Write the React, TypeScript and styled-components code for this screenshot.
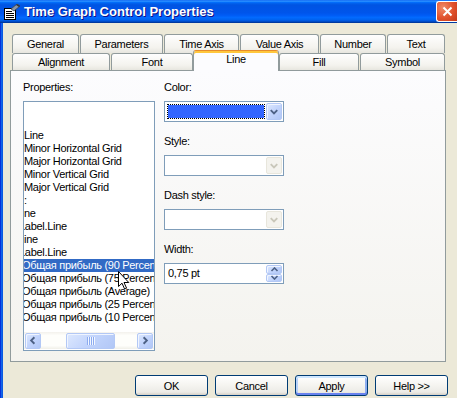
import React from 'react';
import styled, { createGlobalStyle, css } from 'styled-components';

const GlobalStyle = createGlobalStyle`
  html, body {
    margin: 0;
    padding: 0;
    background: #ece9d8;
  }
  body {
    font-family: "Liberation Sans", Arial, sans-serif;
    font-size: 11px;
    letter-spacing: -0.3px;
    color: #000;
  }
`;

const Window = styled.div`
  position: relative;
  width: 457px;
  height: 398px;
  overflow: hidden;
  display: flex;
  flex-direction: column;
  background: #ece9d8;
`;

const TitleBar = styled.div`
  height: 23px;
  flex-shrink: 0;
  display: flex;
  align-items: center;
  padding-left: 4px;
  background: linear-gradient(
    to bottom,
    #0058ee 0%, #3593ff 4%, #288eff 6%, #127dff 8%, #036ffc 10%,
    #0262ee 14%, #0057e5 20%, #0054e3 24%, #0055eb 56%, #005bf5 66%,
    #026afe 76%, #0062ef 86%, #0052d6 92%, #0040ab 96%, #003092 100%
  );
`;

const TitleText = styled.span`
  flex: 1;
  margin-left: 4px;
  color: #fff;
  font: bold 13px "Liberation Sans", Arial, sans-serif;
  letter-spacing: 0;
  text-shadow: 1px 1px #0f1089;
`;

const CloseButton = styled.div`
  align-self: flex-start;
  margin-top: 1px;
  width: 21px;
  height: 21px;
  box-sizing: border-box;
  border: 1px solid #fff;
  border-right: none;
  border-radius: 3px 0 0 3px;
  background: radial-gradient(circle at 30% 30%, #f08a68, #e0512c 55%, #c4391a);
  display: flex;
  align-items: center;
  justify-content: center;
`;

const Body = styled.div`
  flex: 1;
  display: flex;
  flex-direction: column;
  padding: 11px 0 0 10px;
  background: linear-gradient(
    to right,
    #0831d9 0, #0831d9 1px, #166aee 1px, #0855dd 3px, #ece9d8 3px
  );
`;

const TabArea = styled.div`
  width: 436px;
  display: flex;
  flex-direction: column;
`;

const TabRow = styled.div<{ $h: number }>`
  display: flex;
  gap: 1px;
  padding-left: 2px;
  height: ${p => p.$h}px;
`;

const Tab = styled.div<{ $w: number; $selected?: boolean }>`
  position: relative;
  width: ${p => p.$w}px;
  flex-shrink: 0;
  box-sizing: border-box;
  border: 1px solid #919b9c;
  border-bottom: none;
  border-radius: 3px 3px 0 0;
  background: linear-gradient(#fefefe, #f4f3ee 70%, #e7e6df);
  display: flex;
  align-items: center;
  justify-content: center;
  padding-bottom: 1px;
  white-space: nowrap;
  ${p => p.$selected && css`
    z-index: 2;
    margin: -3px -1px 0;
    height: calc(100% + 4px);
    border-top: 1px solid #e68b2c;
    box-shadow: inset 0 2px #ffc73c;
    background: #fcfcfe;
    padding-bottom: 5px;
  `}
`;

const Panel = styled.div`
  position: relative;
  z-index: 1;
  height: 292px;
  box-sizing: border-box;
  border: 1px solid #919b9c;
  border-top-color: #919b9c;
  background: linear-gradient(#fcfcfe, #f4f3ee);
  display: flex;
  gap: 9px;
  padding: 10px 12px 0;
`;

const Column = styled.div<{ $w: number }>`
  width: ${p => p.$w}px;
  display: flex;
  flex-direction: column;
`;

const Label = styled.div`
  height: 13px;
  line-height: 13px;
  margin-bottom: 7px;
`;

const ListBox = styled.div`
  width: 132px;
  height: 250px;
  box-sizing: border-box;
  border: 1px solid #7f9db9;
  background: #fff;
  display: flex;
  flex-direction: column;
`;

const ListRows = styled.div`
  height: 230px;
  padding-top: 1px;
  box-sizing: border-box;
  overflow: hidden;
`;

const ListRow = styled.div<{ $selected?: boolean }>`
  height: 13px;
  line-height: 13px;
  white-space: nowrap;
  overflow: hidden;
  ${p => p.$selected && css`
    background: #316ac5;
    color: #fff;
  `}
`;

const RowText = styled.span<{ $shift: number }>`
  display: inline-block;
  margin-left: ${p => p.$shift}px;
`;

const ScrollBar = styled.div`
  height: 17px;
  display: flex;
  align-items: center;
  padding: 0 1px;
  background: linear-gradient(#f3f1ec, #fefefb 20%, #fefefb 80%, #f0efe8);
`;

const blueButton = css`
  box-sizing: border-box;
  border: 1px solid #b3c8f5;
  border-radius: 2px;
  background: linear-gradient(135deg, #dde8fe, #c2d4fc 50%, #b1c7f6);
  box-shadow: inset 1px 1px #f0f5ff;
`;

const ScrollArrow = styled.div`
  ${blueButton};
  width: 16px;
  height: 16px;
  display: flex;
  align-items: center;
  justify-content: center;
`;

const ScrollTrack = styled.div`
  flex: 1;
  height: 16px;
  display: flex;
  padding-left: 25px;
`;

const ScrollThumb = styled.div`
  ${blueButton};
  width: 49px;
  height: 16px;
  display: flex;
  align-items: center;
  justify-content: center;
`;

const FieldGroup = styled.div`
  display: flex;
  flex-direction: column;
  margin-bottom: 13px;
`;

const Combo = styled.div`
  width: 120px;
  height: 21px;
  box-sizing: border-box;
  border: 1px solid #7f9db9;
  background: #fff;
  display: flex;
  align-items: center;
  padding: 1px;
`;

const ComboValue = styled.div`
  flex: 1;
  height: 17px;
  display: flex;
  align-items: center;
  padding-left: 1px;
`;

const ColorFocus = styled.div`
  flex: 1;
  height: 15px;
  box-sizing: border-box;
  margin-right: 1px;
  border: 1px dotted #000;
  background: #3366ff;
  background-clip: padding-box;
`;

const DropButton = styled.div<{ $disabled?: boolean }>`
  ${blueButton};
  width: 16px;
  height: 17px;
  display: flex;
  align-items: center;
  justify-content: center;
  ${p => p.$disabled && css`
    border-color: #e8e6dc;
    background: #f4f3ee;
    box-shadow: none;
  `}
`;

const SpinText = styled.div`
  flex: 1;
  padding-left: 2px;
  line-height: 17px;
`;

const SpinButtons = styled.div`
  width: 16px;
  height: 17px;
  display: flex;
  flex-direction: column;
`;

const SpinButton = styled.div`
  ${blueButton};
  flex: 1;
  display: flex;
  align-items: center;
  justify-content: center;
`;

const ButtonRow = styled.div`
  display: flex;
  justify-content: flex-end;
  gap: 7px;
  margin-top: 13px;
  padding-right: 9px;
`;

const DialogButton = styled.div<{ $default?: boolean }>`
  width: 73px;
  height: 21px;
  box-sizing: border-box;
  border: 1px solid #003c74;
  border-radius: 3px;
  background: linear-gradient(#ffffff, #f6f5f1 45%, #ecebe6 85%, #d6d0c5);
  display: flex;
  align-items: center;
  justify-content: center;
  ${p => p.$default && css`
    box-shadow: inset 0 2px #cee7ff, inset 0 -2px #6982ee, inset 2px 0 #b8d2f8, inset -2px 0 #8eaef0;
  `}
`;

const Cursor = styled.svg`
  position: absolute;
  left: 118px;
  top: 271px;
  z-index: 10;
`;

const Chevron = ({ dir, color }: { dir: 'down' | 'left' | 'right' | 'up'; color: string }) => {
  const pts = {
    down: '4,6 7.5,9.5 11,6',
    up: '4,9 7.5,5.5 11,9',
    left: '9,4 5.5,7.5 9,11',
    right: '6,4 9.5,7.5 6,11',
  }[dir];
  return (
    <svg width="15" height="15" viewBox="0 0 15 15">
      <polyline points={pts} fill="none" stroke={color} strokeWidth="2" />
    </svg>
  );
};

const SmallArrow = ({ up }: { up?: boolean }) => (
  <svg width="9" height="5" viewBox="0 0 9 5">
    <polyline points={up ? '1.5,4 4.5,1 7.5,4' : '1.5,1 4.5,4 7.5,1'} fill="none" stroke="#4d6185" strokeWidth="1.6" />
  </svg>
);

const TitleIcon = () => (
  <svg width="16" height="16" viewBox="0 0 16 16">
    <rect x="0.5" y="4.5" width="11" height="11" fill="#fff" stroke="#000" />
    <line x1="2" y1="7.5" x2="8" y2="7.5" stroke="#000" />
    <line x1="2" y1="9.5" x2="10" y2="9.5" stroke="#000" />
    <line x1="2" y1="11.5" x2="10" y2="11.5" stroke="#000" />
    <line x1="2" y1="13.5" x2="10" y2="13.5" stroke="#000" />
    <polygon points="7,5 13,0 16,2 10,7" fill="#8a96a6" stroke="#39424f" strokeWidth="0.8" />
    <polygon points="12,1 15,3 16,2 13,0" fill="#2b3440" />
  </svg>
);

const tabsTop = [
  { label: 'General', w: 67 },
  { label: 'Parameters', w: 83 },
  { label: 'Time Axis', w: 75 },
  { label: 'Value Axis', w: 79 },
  { label: 'Number', w: 66 },
  { label: 'Text', w: 58 },
];

const tabsBottom = [
  { label: 'Alignment', w: 98 },
  { label: 'Font', w: 82 },
  { label: 'Line', w: 86, selected: true },
  { label: 'Fill', w: 80 },
  { label: 'Symbol', w: 85 },
];

const items: { text: string; shift?: number; selected?: boolean }[] = [
  { text: '' },
  { text: '' },
  { text: 'Line' },
  { text: 'Minor Horizontal Grid' },
  { text: 'Major Horizontal Grid' },
  { text: 'Minor Vertical Grid' },
  { text: 'Major Vertical Grid' },
  { text: ':' },
  { text: 'ne' },
  { text: 'Label.Line', shift: -5 },
  { text: 'ine' },
  { text: 'Label.Line', shift: -5 },
  { text: 'Общая прибыль (90 Percentile)', shift: -2, selected: true },
  { text: 'Общая прибыль (75 Percentile)', shift: -2 },
  { text: 'Общая прибыль (Average)', shift: -2 },
  { text: 'Общая прибыль (25 Percentile)', shift: -2 },
  { text: 'Общая прибыль (10 Percentile)', shift: -2 },
];

export default function App() {
  return (
    <>
      <GlobalStyle />
      <Window>
        <TitleBar>
          <TitleIcon />
          <TitleText>Time Graph Control Properties</TitleText>
          <CloseButton>
            <svg width="11" height="11" viewBox="0 0 11 11">
              <path d="M1.5 1.5 L9.5 9.5 M9.5 1.5 L1.5 9.5" stroke="#fff" strokeWidth="2" />
            </svg>
          </CloseButton>
        </TitleBar>
        <Body>
          <TabArea>
            <TabRow $h={19}>
              {tabsTop.map(t => (
                <Tab key={t.label} $w={t.w}>{t.label}</Tab>
              ))}
            </TabRow>
            <TabRow $h={17}>
              {tabsBottom.map(t => (
                <Tab key={t.label} $w={t.w} $selected={t.selected}>{t.label}</Tab>
              ))}
            </TabRow>
            <Panel>
              <Column $w={132}>
                <Label>Properties:</Label>
                <ListBox>
                  <ListRows>
                    {items.map((it, i) => (
                      <ListRow key={i} $selected={it.selected}>
                        <RowText $shift={it.shift ?? 0}>{it.text}</RowText>
                      </ListRow>
                    ))}
                  </ListRows>
                  <ScrollBar>
                    <ScrollArrow><Chevron dir="left" color="#4d6185" /></ScrollArrow>
                    <ScrollTrack>
                      <ScrollThumb>
                        <svg width="8" height="8" viewBox="0 0 8 8">
                          {[0, 2, 4, 6].map(x => (
                            <rect key={x} x={x} y="0" width="1" height="8" fill="#8cabf0" />
                          ))}
                          {[1, 3, 5, 7].map(x => (
                            <rect key={x} x={x} y="0" width="1" height="8" fill="#f3f7ff" />
                          ))}
                        </svg>
                      </ScrollThumb>
                    </ScrollTrack>
                    <ScrollArrow><Chevron dir="right" color="#4d6185" /></ScrollArrow>
                  </ScrollBar>
                </ListBox>
              </Column>
              <Column $w={120}>
                <FieldGroup>
                  <Label>Color:</Label>
                  <Combo>
                    <ComboValue><ColorFocus /></ComboValue>
                    <DropButton><Chevron dir="down" color="#4d6185" /></DropButton>
                  </Combo>
                </FieldGroup>
                <FieldGroup>
                  <Label>Style:</Label>
                  <Combo>
                    <ComboValue />
                    <DropButton $disabled><Chevron dir="down" color="#c9c7ba" /></DropButton>
                  </Combo>
                </FieldGroup>
                <FieldGroup>
                  <Label>Dash style:</Label>
                  <Combo>
                    <ComboValue />
                    <DropButton $disabled><Chevron dir="down" color="#c9c7ba" /></DropButton>
                  </Combo>
                </FieldGroup>
                <FieldGroup>
                  <Label>Width:</Label>
                  <Combo>
                    <SpinText>0,75 pt</SpinText>
                    <SpinButtons>
                      <SpinButton><SmallArrow up /></SpinButton>
                      <SpinButton><SmallArrow /></SpinButton>
                    </SpinButtons>
                  </Combo>
                </FieldGroup>
              </Column>
            </Panel>
          </TabArea>
          <ButtonRow>
            <DialogButton>OK</DialogButton>
            <DialogButton>Cancel</DialogButton>
            <DialogButton $default>Apply</DialogButton>
            <DialogButton>Help &gt;&gt;</DialogButton>
          </ButtonRow>
        </Body>
        <Cursor width="12" height="19" viewBox="0 0 12 19">
          <path d="M0.5 0.5 L0.5 15.5 L4 12.2 L6.6 18 L8.6 17.2 L6 11.5 L10.8 11.5 Z" fill="#fff" stroke="#000" strokeWidth="1" />
        </Cursor>
      </Window>
    </>
  );
}
